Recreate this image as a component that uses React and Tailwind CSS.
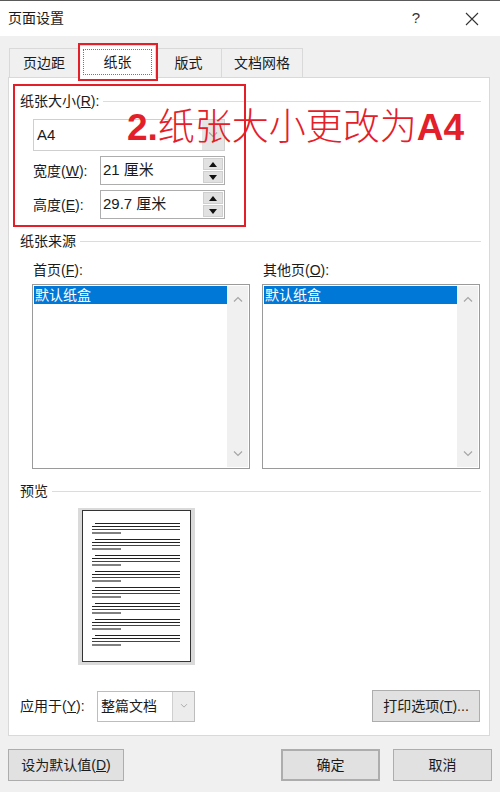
import React from 'react';

const FONT = { fontFamily: '"Liberation Sans", "Noto Sans CJK SC", sans-serif' };

const Chevron = ({ up, className = '' }) => (
  <svg width="10" height="6" viewBox="0 0 10 6" className={className}>
    <path d={up ? 'M1 5.5 L5 1.5 L9 5.5' : 'M1 0.5 L5 4.5 L9 0.5'} fill="none" stroke="#a6a6a6" strokeWidth="1.2" />
  </svg>
);

const Spin = ({ value, mt }) => (
  <div className={`flex items-center ${mt}`}>
    <div className="w-[67px] text-[14px] leading-5 text-[#1a1a1a]">{value.label}</div>
    <div className="w-[125px] h-[29px] border border-[#adadad] bg-white flex items-center justify-between">
      <span className="pl-[2px] text-[15px] text-[#1a1a1a]">{value.text}</span>
      <div className="flex flex-col gap-[1px] mr-[1px]">
        <div className="w-[20px] h-[12px] bg-[#e1e1e1] border border-[#cfcfcf] flex items-center justify-center">
          <svg width="8" height="5" viewBox="0 0 8 5"><path d="M0 5 L4 0 L8 5 Z" fill="#111" /></svg>
        </div>
        <div className="w-[20px] h-[12px] bg-[#e1e1e1] border border-[#cfcfcf] flex items-center justify-center">
          <svg width="8" height="5" viewBox="0 0 8 5"><path d="M0 0 L4 5 L8 0 Z" fill="#111" /></svg>
        </div>
      </div>
    </div>
  </div>
);

const ListBox = () => (
  <div className="w-[218px] h-[185px] border border-[#9a9a9a] bg-white flex p-[1px]">
    <div className="flex-1">
      <div className="h-[18px] bg-[#0078d7] text-white text-[14px] leading-[18px] pl-[1px]">默认纸盒</div>
    </div>
    <div className="w-[21px] bg-[#f0f0f0] flex flex-col items-center justify-between py-[10px]">
      <Chevron up />
      <Chevron />
    </div>
  </div>
);

const Header = ({ children, mt }) => (
  <div className={`flex items-center pl-[11px] pr-[8px] ${mt}`}>
    <span className="text-[14px] leading-5 text-[#1a1a1a] whitespace-nowrap">{children}</span>
    <div className="flex-1 h-px bg-[#dcdcdc] ml-[4px]" />
  </div>
);

// little page thumbnail
const Preview = () => {
  const groups = Array.from({ length: 8 }, (_, i) => 15 + i * 16);
  return (
    <svg width="117" height="157" viewBox="0 0 117 157">
      <rect x="0" y="0" width="117" height="157" fill="#dadada" />
      <rect x="4.5" y="2.5" width="108" height="151" fill="#fff" stroke="#333" strokeWidth="1" />
      {groups.map((y) => (
        <g key={y}>
          <line x1="17" y1={y + 0.5} x2="102" y2={y + 0.5} stroke="#222" strokeWidth="1" />
          <line x1="14" y1={y + 3.5} x2="102" y2={y + 3.5} stroke="#222" strokeWidth="1" />
          <line x1="14" y1={y + 6.5} x2="102" y2={y + 6.5} stroke="#444" strokeWidth="1" />
          <line x1="14" y1={y + 10} x2="43" y2={y + 10} stroke="#808080" strokeWidth="2" />
        </g>
      ))}
    </svg>
  );
};

const Btn = ({ children, className = '' }) => (
  <div className={`h-[32px] bg-[#e1e1e1] border border-[#adadad] flex items-center justify-center text-[14px] text-[#1a1a1a] ${className}`}>
    {children}
  </div>
);

export default function App() {
  return (
    <div className="w-[500px] h-[792px] bg-[#f0f0f0] relative overflow-hidden" style={FONT}>
      {/* title bar */}
      <div className="h-[36px] bg-white border-t border-[#5a5a5a] flex items-center pl-[8px] pr-[21px]">
        <span className="text-[14px] text-[#1a1a1a]">页面设置</span>
        <span className="ml-auto text-[15px] text-[#333] mr-[45px]">?</span>
        <svg width="14" height="14" viewBox="0 0 14 14">
          <path d="M1 1 L13 13 M13 1 L1 13" stroke="#333" strokeWidth="1.1" />
        </svg>
      </div>

      {/* tabs */}
      <div className="flex items-end pl-[9px] h-[41px] relative z-10">
        <div className="w-[70px] h-[29px] border border-b-0 border-[#d9d9d9] bg-[#f0f0f0] flex items-center justify-center text-[14px] text-[#1a1a1a]">页边距</div>
        <div className="w-[77px] h-[33px] -mb-px border border-b-0 border-[#d9d9d9] bg-white flex items-center justify-center p-[3px]">
          <div className="w-full h-full border border-dotted border-[#777] flex items-center justify-center text-[14px] text-[#1a1a1a]">纸张</div>
        </div>
        <div className="w-[66px] h-[29px] border border-b-0 border-l-0 border-[#d9d9d9] bg-[#f0f0f0] flex items-center justify-center text-[14px] text-[#1a1a1a]">版式</div>
        <div className="w-[81px] h-[29px] border border-b-0 border-l-0 border-[#d9d9d9] bg-[#f0f0f0] flex items-center justify-center text-[14px] text-[#1a1a1a]">文档网格</div>
      </div>

      {/* panel */}
      <div className="ml-[8px] w-[482px] h-[659px] bg-white border border-[#d9d9d9] pt-[13px] flex flex-col">
        <Header>纸张大小(<u>R</u>):</Header>

        <div className="ml-[24px] mt-[8px] w-[192px] h-[32px] border border-[#cfcfcf] bg-white flex items-center">
          <span className="flex-1 pl-[3px] text-[15px] text-[#1a1a1a]">A4</span>
          <div className="w-[22px] h-[30px] bg-[#e5e5e5] flex items-center justify-center">
            <Chevron />
          </div>
        </div>

        <div className="ml-[24px]">
          <Spin mt="mt-[5px]" value={{ label: <>宽度(<u>W</u>):</>, text: '21 厘米' }} />
          <Spin mt="mt-[5px]" value={{ label: <>高度(<u>E</u>):</>, text: '29.7 厘米' }} />
        </div>

        <Header mt="mt-[12px]">纸张来源</Header>

        <div className="ml-[23px] mt-[9px] flex gap-[12px]">
          <div className="flex flex-col gap-[4px]">
            <span className="text-[14px] leading-5 text-[#1a1a1a] pl-[1px]">首页(<u>F</u>):</span>
            <ListBox />
          </div>
          <div className="flex flex-col gap-[4px]">
            <span className="text-[14px] leading-5 text-[#1a1a1a] pl-[1px]">其他页(<u>O</u>):</span>
            <ListBox />
          </div>
        </div>

        <Header mt="mt-[12px]">预览</Header>

        <div className="ml-[69px] mt-[7px]">
          <Preview />
        </div>

        <div className="mt-[25px] flex items-center pl-[11px] pr-[9px]">
          <span className="w-[77px] text-[14px] text-[#1a1a1a]">应用于(<u>Y</u>):</span>
          <div className="w-[98px] h-[31px] border border-[#bdbdbd] flex items-center bg-white">
            <span className="flex-1 pl-[3px] text-[14px] text-[#1a1a1a]">整篇文档</span>
            <div className="w-[22px] h-full bg-[#ececec] border-l border-[#cfcfcf] flex items-center justify-center">
              <Chevron className="scale-75" />
            </div>
          </div>
          <Btn className="ml-auto w-[108px]">打印选项(<u>T</u>)...</Btn>
        </div>
      </div>

      {/* footer buttons */}
      <div className="mt-[13px] flex px-[8px]">
        <Btn className="w-[116px]">设为默认值(<u>D</u>)</Btn>
        <Btn className="ml-auto w-[99px] border-[#0078d7] border-2">确定</Btn>
        <Btn className="ml-[13px] w-[99px]">取消</Btn>
      </div>

      {/* red annotation overlays */}
      <div className="absolute left-[78px] top-[43px] w-[80px] h-[38px] border-2 border-[#e3202a] z-20 pointer-events-none" />
      <div className="absolute left-[13px] top-[84px] w-[233px] h-[143px] border-2 border-[#e3202a] z-20 pointer-events-none" />
      <div className="absolute left-[127px] top-[102px] z-20 whitespace-nowrap text-[#e3202a] text-[37px] leading-[44px]">
        <span className="font-bold">2.</span>
        <span style={{ fontFamily: '"Noto Sans CJK SC", sans-serif' }} className="font-light">纸张大小更改为</span>
        <span className="font-bold">A4</span>
      </div>
    </div>
  );
}
